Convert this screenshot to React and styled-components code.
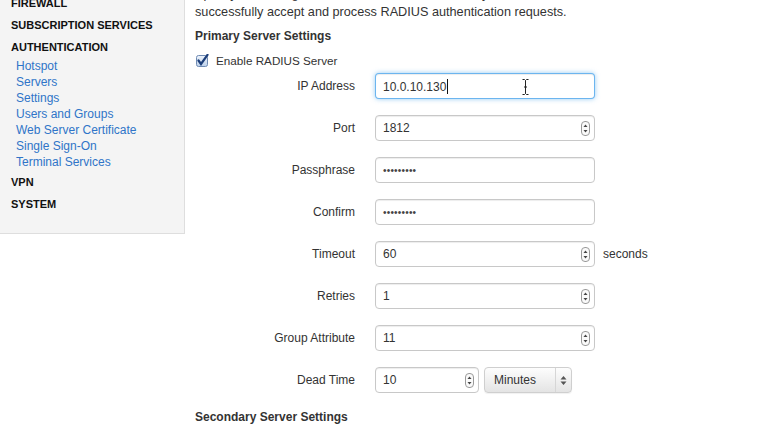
import React from 'react';
import styled, { createGlobalStyle } from 'styled-components';

const GlobalStyle = createGlobalStyle`
  body {
    margin: 0;
    background: #fff;
    font-family: "Liberation Sans", Arial, sans-serif;
    font-size: 12px;
    color: #333;
  }
`;

const Page = styled.div`
  display: flex;
  align-items: flex-start;
  margin-top: -11px;
`;

const Sidebar = styled.nav`
  width: 173px;
  padding: 3px 0 18px 11px;
  background: #f4f4f4;
  border-right: 1px solid #dedede;
  border-bottom: 1px solid #dedede;
`;

const NavHeader = styled.div`
  font-size: 11px;
  font-weight: bold;
  line-height: 22px;
  color: #111;
  text-transform: uppercase;
`;

const NavList = styled.ul`
  list-style: none;
  margin: 0;
  padding: 0 0 1px 5px;
`;

const NavLink = styled.li`
  line-height: 16px;
  color: #2f74c8;
`;

const Main = styled.main`
  flex: 1;
  margin-top: -4px;
  padding-left: 10px;
`;

const Intro = styled.p`
  margin: 0;
  font-size: 12.7px;
  line-height: 18px;
  white-space: nowrap;
`;

const Warn = styled.span`
  color: #e06b10;
`;

const SectionTitle = styled.h3`
  margin: 7px 0 8px;
  font-size: 12px;
  line-height: 16px;
  font-weight: bold;
  color: #333;
`;

const CheckRow = styled.label`
  display: flex;
  align-items: center;
  gap: 7px;
  height: 16px;
  margin-bottom: 5px;
  padding-left: 1px;
  font-size: 11.7px;
`;

const Row = styled.div`
  display: grid;
  grid-template-columns: 160px max-content max-content;
  justify-content: start;
  column-gap: 20px;
  align-items: center;
  height: 26px;
  margin-bottom: 16px;
`;

const Label = styled.span`
  text-align: right;
`;

const Controls = styled.div`
  display: flex;
  align-items: center;
  gap: 5px;
`;

const Unit = styled.span`
  margin-left: -12px;
`;

const Field = styled.div`
  position: relative;
  box-sizing: border-box;
  width: ${(p) => p.$width || 220}px;
  height: 26px;
  display: flex;
  align-items: center;
  justify-content: space-between;
  padding: 0 4px 0 7px;
  background: #fff;
  border: 1px solid ${(p) => (p.$focus ? 'rgba(82,168,236,0.85)' : '#c8c8c8')};
  border-radius: 4px;
  box-shadow: ${(p) =>
    p.$focus
      ? 'inset 0 1px 1px rgba(0,0,0,.075), 0 0 5px rgba(82,168,236,.6)'
      : 'inset 0 1px 1px rgba(0,0,0,.075)'};
  color: #333;
`;

const Caret = styled.span`
  display: inline-block;
  width: 1px;
  height: 15px;
  margin-left: 1px;
  background: #111;
  vertical-align: -3px;
`;

const Dots = styled.span`
  font-size: 10px;
  letter-spacing: 0.2px;
  color: #444;
`;

const Cursor = styled.svg`
  position: absolute;
  left: 146px;
  top: 5px;
`;

const Select = styled.div`
  box-sizing: border-box;
  width: 88px;
  height: 26px;
  display: flex;
  align-items: center;
  border: 1px solid #cfcfcf;
  border-radius: 4px;
  background: linear-gradient(#fdfdfd, #e4e4e4);
  box-shadow: 0 1px 1px rgba(0,0,0,.06);
`;

const SelectText = styled.span`
  flex: 1;
  padding-left: 9px;
  color: #333;
`;

const SelectArrow = styled.span`
  width: 15px;
  height: 100%;
  display: flex;
  align-items: center;
  justify-content: center;
  border-left: 1px solid #d6d6d6;
`;

const Spinner = () => (
  <svg width="9" height="15" viewBox="0 0 9 15">
    <rect x="0.5" y="0.5" width="8" height="14" rx="3.5" fill="#fafafa" stroke="#9a9a9a" />
    <path d="M4.5 3.5 L6.5 6 L2.5 6 Z" fill="#444" />
    <path d="M4.5 11.5 L6.5 9 L2.5 9 Z" fill="#444" />
  </svg>
);

const Checkbox = () => (
  <svg width="13" height="13" viewBox="0 0 13 13">
    <defs>
      <linearGradient id="cb" x1="0" y1="0" x2="0" y2="1">
        <stop offset="0" stopColor="#eef4fc" />
        <stop offset="1" stopColor="#bcd0ea" />
      </linearGradient>
    </defs>
    <rect x="0.5" y="1.5" width="11" height="11" rx="2" fill="url(#cb)" stroke="#6f8bb3" />
    <path d="M2.5 6.5 L5 10 L11.5 0.8" fill="none" stroke="#1d3f7a" strokeWidth="2.2" strokeLinecap="round" />
  </svg>
);

const rows = [
  { label: 'Port', value: '1812', spin: true },
  { label: 'Passphrase', password: true },
  { label: 'Confirm', password: true },
  { label: 'Timeout', value: '60', spin: true, unit: 'seconds' },
  { label: 'Retries', value: '1', spin: true },
  { label: 'Group Attribute', value: '11', spin: true },
];

const links = [
  'Hotspot',
  'Servers',
  'Settings',
  'Users and Groups',
  'Web Server Certificate',
  'Single Sign-On',
  'Terminal Services',
];

const App = () => (
  <>
    <GlobalStyle />
    <Page>
      <Sidebar>
        <NavHeader>Firewall</NavHeader>
        <NavHeader>Subscription Services</NavHeader>
        <NavHeader>Authentication</NavHeader>
        <NavList>
          {links.map((l) => (
            <NavLink key={l}>{l}</NavLink>
          ))}
        </NavList>
        <NavHeader>VPN</NavHeader>
        <NavHeader>System</NavHeader>
      </Sidebar>
      <Main>
        <Intro>
          Specify the settings the Firebox uses to connect to your RADIUS server so that the Firebox can<Warn> I</Warn>
        </Intro>
        <Intro>successfully accept and process RADIUS authentication requests.</Intro>
        <SectionTitle>Primary Server Settings</SectionTitle>
        <CheckRow>
          <Checkbox />
          Enable RADIUS Server
        </CheckRow>
        <Row>
          <Label>IP Address</Label>
          <Field $focus>
            <span>
              10.0.10.130
              <Caret />
            </span>
            <Cursor width="7" height="16" viewBox="0 0 7 16">
              <path d="M0.5 0.5 H2.5 L3.5 1.5 L4.5 0.5 H6.5 M3.5 1.5 V14.5 M0.5 15.5 H2.5 L3.5 14.5 L4.5 15.5 H6.5 M2 8 H5" fill="none" stroke="#222" strokeWidth="1" />
            </Cursor>
          </Field>
        </Row>
        {rows.map((r) => (
          <Row key={r.label}>
            <Label>{r.label}</Label>
            <Field>
              {r.password ? <Dots>•••••••••</Dots> : <span>{r.value}</span>}
              {r.spin && <Spinner />}
            </Field>
            {r.unit && <Unit>{r.unit}</Unit>}
          </Row>
        ))}
        <Row>
          <Label>Dead Time</Label>
          <Controls>
            <Field $width={104}>
              <span>10</span>
              <Spinner />
            </Field>
            <Select>
              <SelectText>Minutes</SelectText>
              <SelectArrow>
                <svg width="7" height="11" viewBox="0 0 7 11">
                  <path d="M3.5 1 L6.5 4.5 H0.5 Z M3.5 10 L6.5 6.5 H0.5 Z" fill="#555" />
                </svg>
              </SelectArrow>
            </Select>
          </Controls>
        </Row>
        <SectionTitle>Secondary Server Settings</SectionTitle>
      </Main>
    </Page>
  </>
);

export default App;
